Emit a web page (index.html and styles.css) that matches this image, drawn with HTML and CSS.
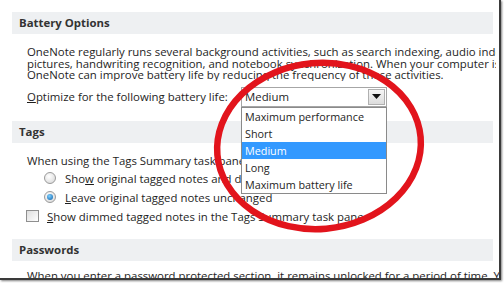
FILE: index.html
```html
<!DOCTYPE html>
<html>
<head>
<meta charset="utf-8">
<link rel="stylesheet" href="styles.css">
</head>
<body>
<div class="frame">
  <div class="page">
    <div class="section-head">Battery Options</div>
    <div class="section-body">
      <p class="para">OneNote regularly runs several background activities, such as search indexing, audio indexing,<br>pictures, handwriting recognition, and notebook synchronization. When your computer is running on battery power,<br>OneNote can improve battery life by reducing the frequency of these activities.</p>
      <div class="opt-row">
        <span class="opt-label"><u>O</u>ptimize for the following battery life:</span>
        <div class="select">
          <span class="select-value">Medium</span>
          <span class="select-btn"><svg width="9" height="5" viewBox="0 0 9 5"><path d="M0 0h9L4.5 5z" fill="#111"/></svg></span>
          <ul class="menu">
            <li>Maximum performance</li>
            <li>Short</li>
            <li class="sel">Medium</li>
            <li>Long</li>
            <li>Maximum battery life</li>
          </ul>
        </div>
      </div>
    </div>
    <div class="section-head">Tags</div>
    <div class="section-body tags">
      <div class="line">When using the Tags Summary task pane</div>
      <div class="choice indent"><span class="radio"></span><span>Sho<u>w</u> original tagged notes and dim them</span></div>
      <div class="choice indent"><span class="radio on"></span><span><u>L</u>eave original tagged notes unchanged</span></div>
      <div class="choice"><span class="check"></span><span class="check-text"><u>S</u>how dimmed tagged notes in the Tags Summary task pane</span></div>
    </div>
    <div class="section-head">Passwords</div>
    <div class="section-body">
      <div class="line">When you enter a password protected section, it remains unlocked for a period of time. You can</div>
    </div>
  </div>
  <svg class="ring" width="504" height="283" viewBox="0 0 504 283">
    <ellipse cx="319" cy="146" rx="102" ry="83" fill="none" stroke="#e2141c" stroke-width="6.5" transform="rotate(-5 319 146)"/>
  </svg>
</div>
</body>
</html>
```
FILE: styles.css
```css
html, body {
  margin: 0;
  padding: 0;
  background: #fff;
}
body {
  width: 504px;
  height: 283px;
  overflow: hidden;
  font-family: "Open Sans", "Noto Sans", sans-serif;
  font-size: 11.4px;
  color: #1e1e1e;
}
.frame {
  position: relative;
  width: 499px;
  height: 278px;
  border-right: 2px solid #3a3a3a;
  border-bottom: 2px solid #3a3a3a;
  box-shadow: 1px 1px 2px rgba(0,0,0,0.5);
  overflow: hidden;
  background: #fff;
}
.page {
  padding: 12px 0 0 12px;
  width: 481px;
}
.section-head {
  height: 22px;
  line-height: 22px;
  background: #eef0f2;
  font-weight: 700;
  color: #333;
  padding-left: 7px;
}
.section-body {
  padding-left: 15px;
  margin-right: -3px;
  white-space: nowrap;
}
.para {
  margin: 12px 0 0 0;
  line-height: 11.6px;
  overflow: hidden;
}
.opt-row {
  display: flex;
  align-items: center;
  margin-top: 6px;
  height: 20px;
  margin-bottom: 14px;
}
.opt-label {
  width: 214px;
}
.select {
  position: relative;
  width: 144px;
  height: 18px;
  border: 1px solid #a6a6a6;
  display: flex;
  align-items: center;
  background: #fff;
}
.select-value {
  flex: 1;
  padding-left: 3px;
}
.select-btn {
  width: 17px;
  height: 16px;
  margin-right: 1px;
  border: 1px solid #b0b0b0;
  background: linear-gradient(#f6f6f6, #dcdcdc);
  display: flex;
  align-items: center;
  justify-content: center;
  box-sizing: border-box;
}
.menu {
  position: absolute;
  left: -1px;
  top: 19px;
  width: 144px;
  margin: 0;
  padding: 0;
  list-style: none;
  border: 1px solid #8a8a8a;
  background: #fff;
  z-index: 2;
  font-size: 10.8px;
}
.menu li {
  height: 17px;
  line-height: 17px;
  padding-left: 3px;
}
.menu li.sel {
  background: #3399ff;
  color: #fff;
}
.tags .line {
  margin-top: 12px;
  height: 12px;
  line-height: 12px;
}
.line {
  margin-top: 9px;
  line-height: 12px;
}
.choice {
  display: flex;
  align-items: center;
  height: 19px;
}
.indent {
  padding-left: 17px;
}
.tags .choice:nth-child(2) {
  margin-top: 2px;
}
.radio {
  width: 12px;
  height: 12px;
  border-radius: 50%;
  border: 1px solid #9a9a9a;
  box-sizing: border-box;
  background: radial-gradient(circle at 40% 35%, #ffffff, #d4d4d4);
  margin-right: 9px;
  position: relative;
}
.radio.on::after {
  content: "";
  position: absolute;
  left: 2px;
  top: 2px;
  width: 6px;
  height: 6px;
  border-radius: 50%;
  background: radial-gradient(circle at 40% 35%, #7fd0ff, #0b5fa8);
}
.check {
  width: 13px;
  height: 12px;
  border: 1px solid #8f8f8f;
  box-sizing: border-box;
  background: linear-gradient(135deg, #dedede, #ffffff);
  margin-left: -1px;
  margin-right: 8px;
}
.tags {
  margin-bottom: 13px;
}
.ring {
  position: absolute;
  left: 0;
  top: 0;
  pointer-events: none;
  z-index: 3;
}
```
